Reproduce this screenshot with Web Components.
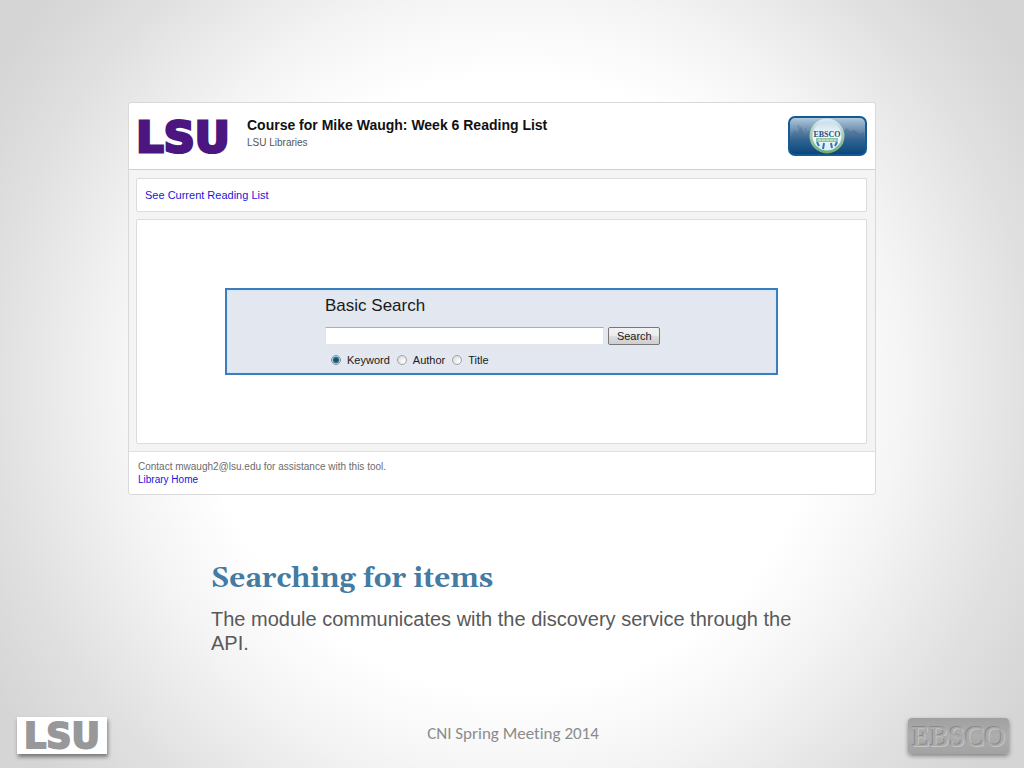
<!DOCTYPE html>
<html lang="en">
<head>
<meta charset="utf-8">
<title>Searching for items</title>
<style>
	body {
		margin: 0;
		font-family: "Liberation Sans", Arial, sans-serif;
	}
</style>
</head>
<body>
<slide-page>
	<course-panel>
		<course-header slot="header">
			Course for Mike Waugh: Week 6 Reading List
			<span slot="subtitle">LSU Libraries</span>
		</course-header>
		<panel-box variant="bar"><text-link href="#reading-list">See Current Reading List</text-link></panel-box>
		<panel-box variant="stage"><basic-search></basic-search></panel-box>
		<div slot="footer">Contact mwaugh2@lsu.edu for assistance with this tool.</div>
		<text-link slot="footer" href="#home">Library Home</text-link>
	</course-panel>
	<slide-caption>
		<span slot="title">Searching for items</span>
		The module communicates with the discovery service through the API.
	</slide-caption>
	<slide-footer slot="footer">CNI Spring Meeting 2014</slide-footer>
</slide-page>

<script>
class SlidePage extends HTMLElement {
	constructor() {
		super();
		this.attachShadow({ mode: "open" });
		this.shadowRoot.innerHTML = `
		<style>
			:host {
				display: flex;
				flex-direction: column;
				min-height: 100vh;
				box-sizing: border-box;
				padding-top: 102px;
				background: radial-gradient(circle farthest-corner at center, #fff 48%, #f5f5f5 61%, #e0e0e0 81%, #d5d5d5 94%);
			}
			main { flex: 1; }
		</style>
		<main><slot></slot></main>
		<slot name="footer"></slot>
		`;
	}
}
customElements.define("slide-page", SlidePage);

class CoursePanel extends HTMLElement {
	constructor() {
		super();
		this.attachShadow({ mode: "open" });
		this.shadowRoot.innerHTML = `
		<style>
			:host {
				display: block;
				width: 73%;
				margin-left: 12.5%;
				box-sizing: border-box;
				border: 1px solid #d9d9d9;
				border-radius: 3px;
				background: #f4f4f4;
			}
			.content {
				display: flex;
				flex-direction: column;
				gap: 7px;
				padding: 8px 8px 7px 7px;
			}
			footer {
				padding: 8px 9px;
				border-top: 1px solid #e0e0e0;
				border-radius: 0 0 3px 3px;
				background: #fff;
				color: #6c6c6c;
				font-size: 10px;
				line-height: 13px;
			}
		</style>
		<slot name="header"></slot>
		<div class="content"><slot></slot></div>
		<footer><slot name="footer"></slot></footer>
		`;
	}
}
customElements.define("course-panel", CoursePanel);

class CourseHeader extends HTMLElement {
	constructor() {
		super();
		this.attachShadow({ mode: "open" });
		this.shadowRoot.innerHTML = `
		<style>
			:host {
				display: flex;
				align-items: center;
				gap: 16px;
				height: 67px;
				padding: 0 8px 0 7px;
				box-sizing: border-box;
				border-bottom: 1px solid #d0d0d0;
				border-radius: 3px 3px 0 0;
				background: #fff;
			}
			.titles {
				flex: 1;
				padding-bottom: 6px;
			}
			h1 {
				margin: 0;
				color: #111;
				font-size: 14px;
				line-height: 20px;
			}
			.subtitle {
				color: #555;
				font-size: 10px;
				line-height: 16px;
			}
		</style>
		<lsu-logo variant="purple"></lsu-logo>
		<div class="titles">
			<h1><slot></slot></h1>
			<div class="subtitle"><slot name="subtitle"></slot></div>
		</div>
		<ebsco-badge></ebsco-badge>
		`;
	}
}
customElements.define("course-header", CourseHeader);

class LsuLogo extends HTMLElement {
	constructor() {
		super();
		this.attachShadow({ mode: "open" });
		this.variants = ["purple", "gray"];
	}

	connectedCallback() {
		this.render();
	}

	render() {
		const gray = this.getAttribute("variant") == "gray";
		this.shadowRoot.innerHTML = `
		<style>
			:host {
				display: block;
				${gray ? "background: #fff; box-shadow: 1px 3px 4px rgba(0, 0, 0, .45);" : ""}
			}
			svg {
				display: block;
				overflow: visible;
			}
			text {
				font-family: "DejaVu Sans", sans-serif;
				font-weight: bold;
				fill: ${gray ? "#98989b" : "#4b1680"};
				stroke: ${gray ? "#98989b" : "#4b1680"};
			}
		</style>
		${gray
			? `<svg width="90" height="37" viewBox="0 0 90 37"><text x="45" y="31" text-anchor="middle" font-size="35" stroke-width="2">LSU</text></svg>`
			: `<svg width="95" height="34" viewBox="0 0 95 34"><text x="47" y="33" text-anchor="middle" font-size="43" stroke-width="3">LSU</text></svg>`}
		`;
	}
}
customElements.define("lsu-logo", LsuLogo);

class EbscoBadge extends HTMLElement {
	constructor() {
		super();
		this.attachShadow({ mode: "open" });
		this.shadowRoot.innerHTML = `
		<style>
			:host { display: block; }
			svg { display: block; }
			text { font-family: "Liberation Serif", serif; font-weight: bold; }
		</style>
		<svg width="79" height="40" viewBox="0 0 79 40">
			<defs>
				<linearGradient id="sky" x1="0" y1="0" x2="0" y2="1">
					<stop offset="0" stop-color="#b4cde1"/>
					<stop offset=".3" stop-color="#7898b5"/>
					<stop offset=".6" stop-color="#326491"/>
					<stop offset="1" stop-color="#06447c"/>
				</linearGradient>
				<linearGradient id="disc" x1="0" y1="0" x2="0" y2="1">
					<stop offset="0" stop-color="#c5dceb"/>
					<stop offset=".5" stop-color="#f4f9fc"/>
					<stop offset="1" stop-color="#dcebf3"/>
				</linearGradient>
				<linearGradient id="ring" x1="0" y1="0" x2="0" y2="1">
					<stop offset="0" stop-color="#d9e8ef"/>
					<stop offset="1" stop-color="#6eac78"/>
				</linearGradient>
			</defs>
			<rect x="1" y="1" width="77" height="38" rx="6" fill="url(#sky)" stroke="#165a91" stroke-width="2"/>
			<path d="M3 19 L7 14 L10 17 L13 10 L17 19 L21 15 L24 22 L14 25 L3 22 Z" fill="#38658c" opacity=".35"/>
			<path d="M54 16 L59 12 L63 16 L67 14 L71 18 L76 16 V25 L65 22 L55 24 Z" fill="#38658c" opacity=".35"/>
			<path d="M10 9 L13 20 M17 12 L19 20 M59 19 L65 15 L73 20" fill="none" stroke="#4f7291" stroke-width="2" opacity=".35"/>
			<circle cx="39" cy="20" r="16" fill="url(#disc)" stroke="url(#ring)" stroke-width="3"/>
			<path d="M29 26 L31 30 M36 27 L35 33 M43 27 L44 32 M49 26 L47 30" stroke="#2f74c4" stroke-width="2"/>
			<rect x="28" y="22" width="22" height="4" fill="#8fc6a2"/>
			<path d="M30 24 H48" stroke="#e5f3e8" stroke-dasharray="3 1"/>
			<text x="39" y="21" text-anchor="middle" font-size="8" fill="#244e80">EBSCO</text>
		</svg>
		`;
	}
}
customElements.define("ebsco-badge", EbscoBadge);

class PanelBox extends HTMLElement {
	constructor() {
		super();
		this.attachShadow({ mode: "open" });
		this.shadowRoot.innerHTML = `
		<style>
			:host {
				display: block;
				box-sizing: border-box;
				border: 1px solid #dcdcdc;
				border-radius: 2px;
				background: #fff;
			}
			:host([variant="bar"]) {
				padding: 8px;
				font-size: 11px;
				line-height: 16px;
			}
			:host([variant="stage"]) {
				padding: 68px 88px;
			}
		</style>
		<slot></slot>
		`;
	}
}
customElements.define("panel-box", PanelBox);

class TextLink extends HTMLElement {
	constructor() {
		super();
		this.attachShadow({ mode: "open" });
	}

	connectedCallback() {
		this.render();
	}

	render() {
		const href = this.getAttribute("href") || "#";
		this.shadowRoot.innerHTML = `
		<style>
			:host { display: block; }
			a { color: #2015dc; text-decoration: none; }
			a:hover { text-decoration: underline; }
		</style>
		<a href="${href}"><slot></slot></a>
		`;
	}
}
customElements.define("text-link", TextLink);

class BasicSearch extends HTMLElement {
	constructor() {
		super();
		this.attachShadow({ mode: "open" });
		this.shadowRoot.innerHTML = `
		<style>
			:host {
				display: block;
				box-sizing: border-box;
				padding: 6px 0 5px 98px;
				border: 2px solid #3b7ebb;
				background: #e3e7ef;
				box-shadow: inset 0 0 0 1px #d5e6f8;
				color: #1a1a1a;
			}
			h2 {
				margin: 0 0 11px;
				font-size: 17px;
				font-weight: normal;
				line-height: 20px;
			}
			.query {
				display: flex;
				gap: 4px;
				height: 18px;
			}
			input[type="search"] {
				width: 62%;
				box-sizing: border-box;
				margin: 0;
				padding: 0 3px;
				appearance: none;
				border: 1px solid #e2e5ea;
				border-top-color: #abadb3;
				background: #fff;
				font: 11px "Liberation Sans", Arial, sans-serif;
			}
			button {
				width: 52px;
				padding: 0;
				border: 1px solid #777;
				border-radius: 2px;
				background: linear-gradient(#f2f2f2, #ebebeb 50%, #dddddd 50%, #cfcfcf);
				color: #1a1a1a;
				font: 11px "Liberation Sans", Arial, sans-serif;
			}
			.fields {
				display: flex;
				gap: 7px;
				margin-top: 7px;
				padding-left: 6px;
				font-size: 11px;
				line-height: 16px;
			}
			label {
				display: flex;
				align-items: center;
				gap: 6px;
			}
			input[type="radio"] {
				appearance: none;
				width: 10px;
				height: 10px;
				box-sizing: border-box;
				margin: 0;
				border: 1px solid #a2a5a8;
				border-radius: 50%;
				background: radial-gradient(circle at 70% 70%, #fff, #d0d3d6);
			}
			input[type="radio"]:checked {
				border-color: #7c93a5;
				background: radial-gradient(circle, #1d4f70 0 2px, #5389a8 3px, #dcecf5 4px);
			}
		</style>
		<form onsubmit="return false">
			<h2>Basic Search</h2>
			<div class="query">
				<input type="search" aria-label="Search terms">
				<button type="submit">Search</button>
			</div>
			<div class="fields">
				<label><input type="radio" name="field" value="keyword" checked>Keyword</label>
				<label><input type="radio" name="field" value="author">Author</label>
				<label><input type="radio" name="field" value="title">Title</label>
			</div>
		</form>
		`;
	}
}
customElements.define("basic-search", BasicSearch);

class SlideCaption extends HTMLElement {
	constructor() {
		super();
		this.attachShadow({ mode: "open" });
		this.shadowRoot.innerHTML = `
		<style>
			:host {
				display: block;
				width: 59%;
				margin: 64px 0 0 211px;
				color: #595959;
				font-size: 20px;
				line-height: 24px;
			}
			h2 {
				margin: 0 0 8px;
				color: #437ba3;
				font: bold 28px/40px Gelasio, Georgia, "Liberation Serif", serif;
			}
			p { margin: 0; }
		</style>
		<h2><slot name="title"></slot></h2>
		<p><slot></slot></p>
		`;
	}
}
customElements.define("slide-caption", SlideCaption);

class SlideFooter extends HTMLElement {
	constructor() {
		super();
		this.attachShadow({ mode: "open" });
		this.shadowRoot.innerHTML = `
		<style>
			:host {
				display: grid;
				grid-template-columns: 1fr auto 1fr;
				align-items: center;
				padding: 0 15px 14px 17px;
				color: #8b8b8b;
				font: 17px/20px Carlito, Lato, sans-serif;
				font-variant-ligatures: none;
			}
			lsu-logo { justify-self: start; }
			.text { padding-bottom: 4px; }
			.ebsco {
				justify-self: end;
				width: 101px;
				border-radius: 4px;
				background: linear-gradient(#a0a0a0, #adadad 50%, #a2a2a2);
				box-shadow: 0 2px 4px rgba(0, 0, 0, .4);
				color: #a9a9a9;
				font: 29px/36px "Liberation Serif", serif;
				text-align: center;
				text-shadow: 1px 1px 0 #c4c4c4, -1px -1px 0 #8b8b8b;
			}
		</style>
		<lsu-logo variant="gray"></lsu-logo>
		<div class="text"><slot></slot></div>
		<div class="ebsco">EBSCO</div>
		`;
	}
}
customElements.define("slide-footer", SlideFooter);
</script>
</body>
</html>
